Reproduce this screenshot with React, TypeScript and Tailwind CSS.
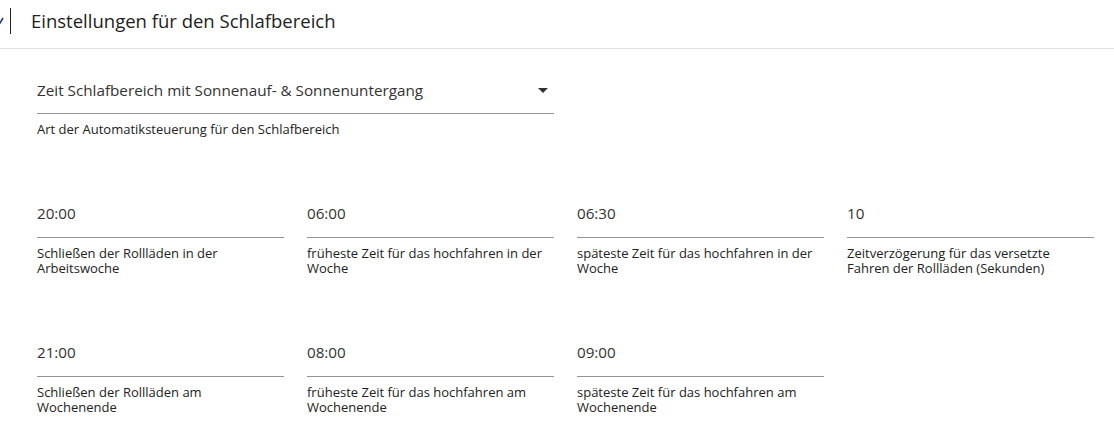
const rows = [
  [
    { value: "20:00", label: "Schließen der Rollläden in der Arbeitswoche" },
    { value: "06:00", label: "früheste Zeit für das hochfahren in der Woche" },
    { value: "06:30", label: "späteste Zeit für das hochfahren in der Woche" },
    { value: "10", label: "Zeitverzögerung für das versetzte Fahren der Rollläden (Sekunden)" },
  ],
  [
    { value: "21:00", label: "Schließen der Rollläden am Wochenende" },
    { value: "08:00", label: "früheste Zeit für das hochfahren am Wochenende" },
    { value: "09:00", label: "späteste Zeit für das hochfahren am Wochenende" },
  ],
];

function Field({ value, label }: { value: string; label: string }) {
  return (
    <div className="w-[247px] shrink-0">
      <div className="border-b border-[#949494] pb-[15px] text-[15.2px] leading-[18px] text-[#333]">{value}</div>
      <div className="mt-[8px] pr-[8px] text-[13px] leading-[15px] text-[#222]">{label}</div>
    </div>
  );
}

export default function App() {
  return (
    <div className="w-[1114px] h-[448px] bg-white overflow-hidden" style={{ fontFamily: '"Open Sans", sans-serif' }}>
      <header className="h-[49px] border-b border-[#e0e0e0] flex items-start pt-[8px]">
        <div className="relative w-[31px] h-[26px] flex items-center">
          <svg width="6" height="8" viewBox="0 0 6 8" className="absolute -left-[2px] top-[9px]">
            <path d="M0 4 L2 6 L5 1" fill="none" stroke="#1a3b6e" strokeWidth="1.6" />
          </svg>
          <div className="absolute left-[10px] top-0 h-[26px] w-px bg-[#222]" />
        </div>
        <h1 className="text-[18.5px] leading-[26px] text-[#222]">Einstellungen für den Schlafbereich</h1>
      </header>
      <main className="pl-[37px] pt-[31px] flex flex-col gap-[67px]">
        <div className="w-[517px]">
          <div className="flex items-center justify-between border-b border-[#949494] pb-[14px] pt-[1px] text-[15.25px] leading-[18px] text-[#333]">
            <span>Zeit Schlafbereich mit Sonnenauf- &amp; Sonnenuntergang</span>
            <svg width="10" height="5" viewBox="0 0 10 5" className="mr-[6px]">
              <path d="M0 0 L10 0 L5 5 Z" fill="#333" />
            </svg>
          </div>
          <div className="mt-[8px] text-[13px] leading-[15px] text-[#222]">Art der Automatiksteuerung für den Schlafbereich</div>
        </div>
        {rows.map((row, i) => (
          <div key={i} className="flex gap-[23px]">
            {row.map((f) => (
              <Field key={f.value} value={f.value} label={f.label} />
            ))}
          </div>
        ))}
      </main>
    </div>
  );
}
